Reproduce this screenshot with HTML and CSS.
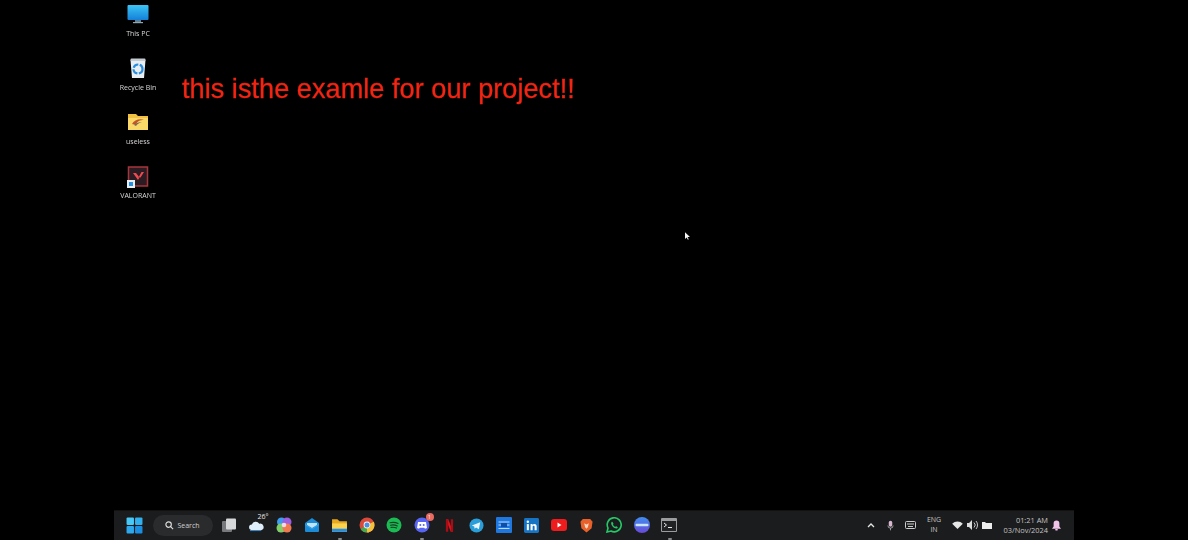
FILE: index.html
```html
<!DOCTYPE html>
<html lang="en">
<head>
<meta charset="utf-8">
<title>Desktop</title>
<link rel="stylesheet" href="styles.css">
</head>
<body>
<main class="screen">
  <section class="desktop">
    <div class="icons">
      <div class="dicon">
        <svg viewBox="0 0 24 24" width="24" height="24"><defs><linearGradient id="pc" x1="0" y1="0" x2="0" y2="1"><stop offset="0" stop-color="#3cc4f4"/><stop offset="1" stop-color="#1480d8"/></linearGradient></defs><rect x="1.500" y="3" width="21" height="15" rx="1" fill="url(#pc)"/><rect x="9" y="18" width="6" height="2" fill="#5d7f94"/><rect x="7" y="20" width="10" height="1.200" fill="#8fa6b4"/></svg>
        <span>This PC</span>
      </div>
      <div class="dicon">
        <svg viewBox="0 0 24 24" width="24" height="24"><path d="M4.500 4h15l-1.500 18H6z" fill="#e8eef2"/><rect x="4.500" y="2.500" width="15" height="2.500" rx="1" fill="#c4ccd2"/><circle cx="12" cy="13" r="4.500" fill="none" stroke="#2a8ee0" stroke-width="2.200" stroke-dasharray="6 1.500"/></svg>
        <span>Recycle Bin</span>
      </div>
      <div class="dicon">
        <svg viewBox="0 0 24 24" width="24" height="24"><path d="M2 4h8l2 2h10v14H2z" fill="#f0c040"/><path d="M2 8h20v12H2z" fill="#fbd968"/><path d="M6 14c2-4 8-6 12-4-4 0-7 1-8 5z" fill="#c0562a"/><path d="M8 15c2-2 5-3 8-3-3 1-5 2-6 4z" fill="#7a6a58"/></svg>
        <span>useless</span>
      </div>
      <div class="dicon">
        <svg viewBox="0 0 24 24" width="24" height="24"><rect x="2.500" y="3" width="19" height="19" fill="#2a1c22" stroke="#a8343c" stroke-width="1.500"/><path d="M7 9l5 7 1.500-2.500L10 9zM18 8l-3.500 5.500h-2L15.500 8z" fill="#ef4a50"/><rect x="1" y="16" width="8" height="8" fill="#e8eef2"/><rect x="3" y="18" width="4" height="4" fill="#2a8ee0"/></svg>
        <span>VALORANT</span>
      </div>
    </div>
    <h1 class="headline">this isthe examle for our project!!</h1>
    <svg class="cursor" viewBox="0 0 6 9" width="5" height="8"><path d="M0 0v8l2-1.800 1.500 2.800 1-.6L3 5.600h3z" fill="#f4f4f4"/></svg>
  </section>
  <footer class="taskbar">
    <div class="apps">
      <span class="slot"><svg viewBox="0 0 16 16" width="17" height="17"><rect x="0.500" y="0.500" width="7" height="7" rx="1" fill="#47c8f6"/><rect x="8.500" y="0.500" width="7" height="7" rx="1" fill="#30b0ee"/><rect x="0.500" y="8.500" width="7" height="7" rx="1" fill="#2ea8ec"/><rect x="8.500" y="8.500" width="7" height="7" rx="1" fill="#1a8ee0"/></svg></span>
      <div class="search">
        <svg viewBox="0 0 10 10" width="9" height="9"><circle cx="4" cy="4" r="3" fill="none" stroke="#ddd" stroke-width="1.300"/><path d="M6.200 6.200L9 9" stroke="#ddd" stroke-width="1.300"/></svg>
        <span>Search</span>
      </div>
      <span class="slot"><svg viewBox="0 0 16 16" width="16" height="16"><rect x="1" y="4" width="10" height="11" rx="1" fill="#77797c"/><rect x="5" y="1.500" width="10" height="11" rx="1" fill="#d6d8da"/></svg></span>
      <span class="slot weather"><svg viewBox="0 0 18 14" width="17" height="13"><path d="M4 12a3 3 0 0 1 0-6 4.500 4.500 0 0 1 8-1 3.500 3.500 0 0 1 2 7z" fill="#dfeefb"/><path d="M2 12h12v1H2z" fill="#3c8edc"/></svg><b>26°</b></span>
      <span class="slot"><svg viewBox="0 0 16 16" width="16" height="16"><circle cx="5.500" cy="5" r="4.500" fill="#3c9cf0"/><circle cx="11" cy="5" r="4.500" fill="#9b5fe0"/><circle cx="5" cy="11" r="4.500" fill="#7fce6a"/><circle cx="11" cy="11" r="4.500" fill="#f07a50"/><circle cx="8" cy="8" r="2.300" fill="#f4d8e8"/></svg></span>
      <span class="slot"><svg viewBox="0 0 16 16" width="16" height="16"><path d="M1 6l7-5 7 5v8a1 1 0 0 1-1 1H2a1 1 0 0 1-1-1z" fill="#1c8cd8"/><path d="M3 6h10v2l-5 3-5-3z" fill="#bfe4f8"/><path d="M1 7l7 4.500L15 7v1l-7 4.500L1 8z" fill="#2fa6ec"/></svg></span>
      <span class="slot running"><svg viewBox="0 0 16 16" width="17" height="17"><path d="M1 2h5l2 2h7v10H1z" fill="#e8a820"/><path d="M1 6h14v8H1z" fill="#fbd24e"/><rect x="1" y="11" width="14" height="3" fill="#2a8ee0"/></svg></span>
      <span class="slot"><svg viewBox="0 0 16 16" width="16" height="16"><circle cx="8" cy="8" r="7.500" fill="#d94a3c"/><path d="M8 8L1.500 12A7.500 7.500 0 0 0 8 15.500z" fill="#4aa84e"/><path d="M8 8l6.800-3.200A7.500 7.500 0 0 1 8 15.500z" fill="#f2c23c"/><circle cx="8" cy="8" r="3.400" fill="#f4f4f4"/><circle cx="8" cy="8" r="2.500" fill="#4a8ee8"/></svg></span>
      <span class="slot"><svg viewBox="0 0 16 16" width="16" height="16"><circle cx="8" cy="8" r="7.500" fill="#1db954"/><path d="M4 5.800c3-.8 5.500-.6 8 .7M4.500 8.200c2.500-.6 4.700-.4 6.800.7M5 10.400c2-.4 3.800-.3 5.500.6" fill="none" stroke="#10401f" stroke-width="1.100" stroke-linecap="round"/></svg></span>
      <span class="slot running discord"><svg viewBox="0 0 16 16" width="16" height="16"><circle cx="8" cy="8" r="7.500" fill="#5865f2"/><path d="M4 5h8l1 6-2 .8-.8-1H5.800l-.8 1L3 11z" fill="#fff"/><circle cx="6.300" cy="8" r="1" fill="#5865f2"/><circle cx="9.700" cy="8" r="1" fill="#5865f2"/></svg><i class="badge">1</i></span>
      <span class="slot"><svg viewBox="0 0 10 16" width="9" height="15"><path d="M1 1h2.600L9 15H6.400z" fill="#e5141e"/><path d="M1 1h2.600v14L1 15zM6.400 1H9v14H6.400z" fill="#a80c14"/></svg></span>
      <span class="slot"><svg viewBox="0 0 16 16" width="15" height="15"><circle cx="8" cy="8" r="7.500" fill="#2a9ed8"/><path d="M3 8l9-3.500-1.500 7.500-3-2-1.500 1.500-.4-2.500z" fill="#e8f4fb"/></svg></span>
      <span class="slot"><svg viewBox="0 0 16 16" width="16" height="16"><rect width="16" height="16" rx="1" fill="#1e78e0"/><path d="M2.500 5h11M2.500 8h11M2.500 11.500h11" stroke="#bcd8f6" stroke-width="1.200"/><rect x="5" y="6" width="6" height="4" fill="#0f4ea8"/></svg></span>
      <span class="slot"><svg viewBox="0 0 16 16" width="15" height="15"><rect width="16" height="16" rx="1.500" fill="#1774c4"/><rect x="3" y="6.500" width="2.200" height="6.500" fill="#fff"/><circle cx="4.100" cy="4" r="1.300" fill="#fff"/><path d="M7 6.500h2v1c1-1.500 4.500-1.700 4.500 1.500v4h-2.200V9.500c0-1.500-2.100-1.500-2.100 0V13H7z" fill="#fff"/></svg></span>
      <span class="slot"><svg viewBox="0 0 16 12" width="16" height="12"><rect width="16" height="12" rx="3" fill="#ee1c1c"/><path d="M6.500 3.500l4 2.500-4 2.500z" fill="#fff"/></svg></span>
      <span class="slot"><svg viewBox="0 0 14 16" width="13" height="15"><path d="M3 1h8l2.500 3-1 7L7 15.500 1.500 11l-1-7z" fill="#e8602a"/><path d="M4.500 5.500L7 7l2.500-1.500L8.500 10 7 11.500 5.500 10z" fill="#f6d6c0"/></svg></span>
      <span class="slot"><svg viewBox="0 0 16 16" width="16" height="16"><path d="M1 15l1-4a7 7 0 1 1 3 3z" fill="none" stroke="#25c866" stroke-width="1.600"/><path d="M5.500 5c1-1 1.500 1 2 1.800L7 7.800c.6 1 1.200 1.600 2.200 2l1-.6c1 .4 2 1 1.400 1.800-2 2-7.800-2.400-6.100-6z" fill="#25c866"/></svg></span>
      <span class="slot"><svg viewBox="0 0 16 16" width="16" height="16"><defs><linearGradient id="bc" x1="0" y1="0" x2="0" y2="1"><stop offset="0" stop-color="#3f8ff0"/><stop offset="1" stop-color="#6a48d8"/></linearGradient></defs><circle cx="8" cy="8" r="8" fill="url(#bc)"/><rect x="1.500" y="6.800" width="13" height="2.400" rx="1.200" fill="#c8e4fa"/></svg></span>
      <span class="slot running"><svg viewBox="0 0 16 14" width="16" height="14"><rect width="16" height="14" rx="1" fill="#9a9c9e"/><rect x="1" y="3" width="14" height="10" fill="#202224"/><path d="M3 5l2.500 2L3 9" fill="none" stroke="#e8e8e8" stroke-width="1"/><path d="M7 9.500h4" stroke="#e8e8e8" stroke-width="1"/></svg></span>
    </div>
    <div class="tray">
      <svg class="t-chev" viewBox="0 0 8 5" width="8" height="5"><path d="M1 4l3-3 3 3" fill="none" stroke="#e6e6e6" stroke-width="1.300"/></svg>
      <svg class="t-mic" viewBox="0 0 8 12" width="7" height="11"><rect x="2" y="0.500" width="4" height="7" rx="2" fill="#d8b8d0"/><path d="M1 6a3 3 0 0 0 6 0M4 9v2.500" fill="none" stroke="#bbb" stroke-width="0.900"/></svg>
      <svg class="t-key" viewBox="0 0 11 8" width="11" height="8"><rect x="0.500" y="0.500" width="10" height="7" rx="1" fill="none" stroke="#ccc"/><path d="M2 3h7M3 5.500h5" stroke="#ccc"/></svg>
      <div class="lang"><span>ENG</span><span>IN</span></div>
      <svg class="t-wifi" viewBox="0 0 12 9" width="11" height="8"><path d="M0 3a8.500 8.500 0 0 1 12 0L6 9z" fill="#e6e6e6"/></svg>
      <svg class="t-vol" viewBox="0 0 12 10" width="12" height="10"><path d="M0 3h2l3-3v10L2 7H0z" fill="#ddd"/><path d="M7 2.500a3.500 3.500 0 0 1 0 5M9 1a6 6 0 0 1 0 8" fill="none" stroke="#ddd" stroke-width="0.900"/></svg>
      <svg class="t-bat" viewBox="0 0 11 8" width="11" height="8"><path d="M0 1h3l1 1h6v6H0z" fill="#ececec"/></svg>
      <div class="clock"><span>01:21 AM</span><span>03/Nov/2024</span></div>
      <svg class="t-bell" viewBox="0 0 10 12" width="9" height="11"><path d="M5 0.500a3.200 3.200 0 0 1 3.200 3.200V7L10 9.500H0L1.800 7V3.700A3.200 3.200 0 0 1 5 .5z" fill="#f0c4e8"/><rect x="3.500" y="10" width="3" height="1.600" rx="0.800" fill="#f0c4e8"/></svg>
    </div>
  </footer>
</main>
</body>
</html>
```
FILE: styles.css
```css
* { box-sizing: border-box; }
html, body { margin: 0; padding: 0; background: #000; }
body { width: 1188px; height: 540px; overflow: hidden; font-family: "Open Sans", "Liberation Sans", sans-serif; }
.screen { width: 960px; height: 540px; margin-left: 114px; display: flex; flex-direction: column; filter: blur(0.6px); }
.desktop { position: relative; flex: 1; display: flex; align-items: flex-start; }
.icons { width: 48px; display: flex; flex-direction: column; }
.dicon { height: 54px; display: flex; flex-direction: column; align-items: center; padding-top: 2px; color: #d8d8d8; font-size: 7px; line-height: 10px; white-space: nowrap; }
.dicon svg { display: block; margin-bottom: 1px; }
.dicon span { margin-top: 2px; }
.headline { margin: 72px 0 0 20px; font-family: "Liberation Sans", Arial, sans-serif; font-weight: 400; font-size: 27.2px; line-height: 34px; color: #f42412; -webkit-text-stroke: 0.3px #f42412; white-space: nowrap; }
.cursor { position: absolute; left: 570.500px; top: 232px; }
.taskbar { height: 30px; padding-bottom: 1px; background: #1b1c1d; display: flex; align-items: center; justify-content: space-between; border-top: 1px solid #121212; }
.apps { display: flex; align-items: center; padding-left: 7px; }
.slot { position: relative; width: 27.500px; height: 28px; display: flex; align-items: center; justify-content: center; }
.running::after { content: ""; position: absolute; left: 12px; bottom: -1px; width: 4px; height: 2px; border-radius: 1px; background: #8a8a8a; }
.weather b { position: absolute; top: 2px; right: 2px; font-size: 7px; line-height: 8px; font-weight: 400; color: #e8e8e8; }
.badge { position: absolute; top: 2px; right: 2px; width: 8px; height: 8px; border-radius: 50%; background: #e86a60; color: #fff; font-size: 5px; line-height: 8px; font-style: normal; text-align: center; }
.search { width: 60px; height: 21px; margin: 0 3px 0 4px; border-radius: 11px; background: #2a2b2c; display: flex; align-items: center; justify-content: center; gap: 3px; font-size: 7px; color: #d0d0d0; }
.tray { display: flex; align-items: center; padding-right: 13px; color: #c4c4c4; font-size: 7px; }
.t-chev { margin-right: 12px; }
.t-mic { margin-right: 11px; }
.t-key { margin-right: 8px; }
.lang, .clock { display: flex; flex-direction: column; align-items: center; line-height: 10px; }
.lang { width: 20px; margin-right: 8px; }
.t-wifi { margin-right: 4px; }
.t-vol { margin-right: 3px; }
.t-bat { margin-right: 7px; }
.clock { width: 48px; margin-right: 4px; align-items: flex-end; font-size: 7.400px; }
```
